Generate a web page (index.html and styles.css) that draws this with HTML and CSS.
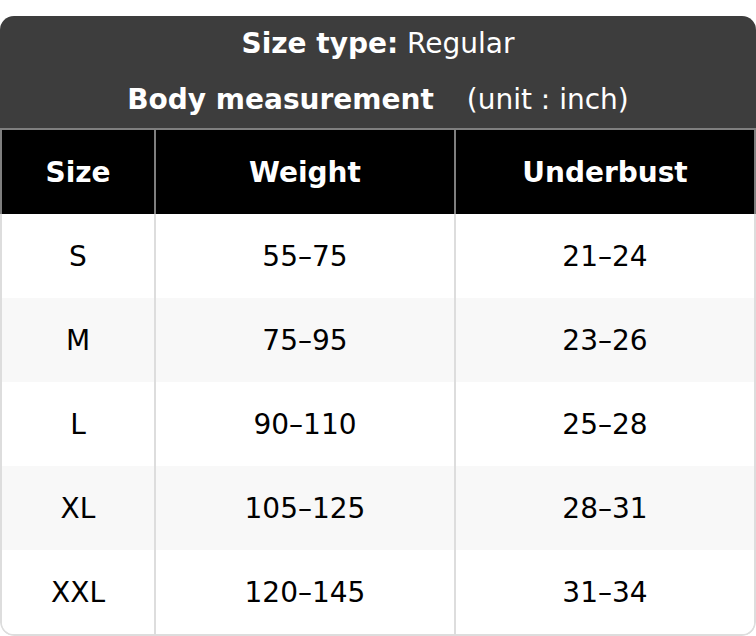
FILE: index.html
```html
<!DOCTYPE html>
<html lang="en">
<head>
<meta charset="utf-8">
<title>Size chart</title>
<link rel="stylesheet" href="styles.css">
</head>
<body>
<div class="chart">
  <div class="title">
    <div class="title-line"><b>Size type:</b> Regular</div>
    <div class="title-line"><b>Body measurement</b><span class="unit">(unit : inch)</span></div>
  </div>
  <div class="thead">
    <div class="cell">Size</div>
    <div class="cell">Weight</div>
    <div class="cell">Underbust</div>
  </div>
  <div class="tbody">
    <div class="row">
      <div class="cell">S</div><div class="cell">55–75</div><div class="cell">21–24</div>
    </div>
    <div class="row">
      <div class="cell">M</div><div class="cell">75–95</div><div class="cell">23–26</div>
    </div>
    <div class="row">
      <div class="cell">L</div><div class="cell">90–110</div><div class="cell">25–28</div>
    </div>
    <div class="row">
      <div class="cell">XL</div><div class="cell">105–125</div><div class="cell">28–31</div>
    </div>
    <div class="row">
      <div class="cell">XXL</div><div class="cell">120–145</div><div class="cell">31–34</div>
    </div>
  </div>
</div>
</body>
</html>
```
FILE: styles.css
```css
html, body {
  margin: 0;
  padding: 0;
  background: #ffffff;
}
body {
  padding-top: 16px;
  font-family: "DejaVu Sans", "Liberation Sans", sans-serif;
  font-size: 28px;
  color: #000000;
}
.chart {
  width: 756px;
  border-radius: 14px;
  overflow: hidden;
}
.title {
  background: #3d3d3d;
  color: #ffffff;
  text-align: center;
}
.title-line {
  height: 56px;
  line-height: 56px;
}
.title-line b {
  font-weight: bold;
}
.unit {
  margin-left: 33px;
}
.thead {
  display: grid;
  grid-template-columns: 152px 300px 300px;
  background: #000000;
  color: #ffffff;
  font-weight: bold;
  border: 2px solid #7f7f7f;
  border-bottom: none;
}
.thead .cell {
  height: 84px;
  display: flex;
  align-items: center;
  justify-content: center;
}
.thead .cell + .cell {
  border-left: 2px solid #7f7f7f;
}
.tbody {
  border: 2px solid #dddddd;
  border-top: none;
  border-radius: 0 0 14px 14px;
  overflow: hidden;
}
.row {
  display: grid;
  grid-template-columns: 152px 300px 300px;
  background: #ffffff;
}
.row:nth-child(even) {
  background: #f8f8f8;
}
.row .cell {
  height: 84px;
  display: flex;
  align-items: center;
  justify-content: center;
}
.row .cell + .cell {
  border-left: 2px solid #dddddd;
}
```
